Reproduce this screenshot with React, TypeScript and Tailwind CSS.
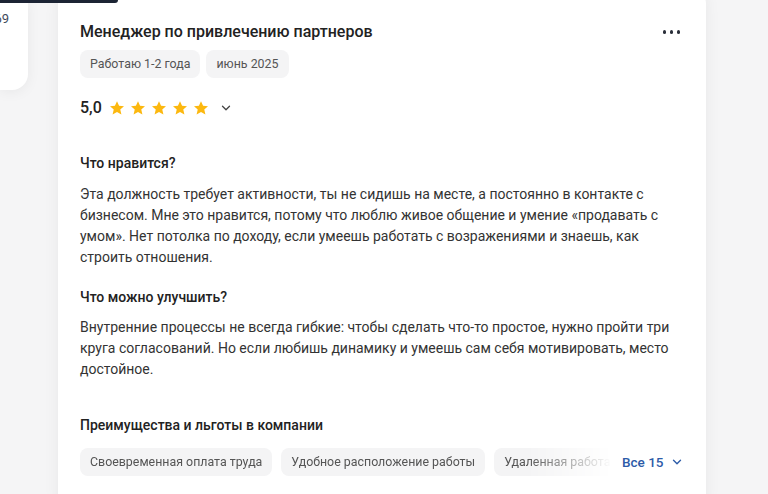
import { ChevronDown } from 'lucide-react';

const Star = () => (
  <svg width="16" height="16" viewBox="0 0 24 24" className="fill-[#fcb80f]">
    <path d="M12 1.8l3.1 6.9 7.4.7-5.6 5 1.7 7.4L12 17.9l-6.6 3.9 1.7-7.4-5.6-5 7.4-.7z" />
  </svg>
);

const benefits = ['Своевременная оплата труда', 'Удобное расположение работы', 'Удаленная работа'];

export default function App() {
  return (
    <div className="relative min-h-screen overflow-hidden bg-[#f5f5f6] font-['Roboto',sans-serif] text-[#222]">
      <div className="absolute left-0 top-0 h-[3px] w-[118px] rounded-br-sm bg-[#1c2434]" />

      <div className="flex items-start gap-[30px]">
        <div className="flex h-[90px] w-[28px] shrink-0 justify-end overflow-hidden rounded-br-2xl bg-white pt-[9px] shadow-[0_2px_14px_rgba(0,0,0,0.06)]">
          <span className="mr-[19px] whitespace-nowrap text-[13px] text-[#3f4a5c]">4,69</span>
        </div>

        <div className="-mt-[12px] w-[648px] shrink-0 rounded-2xl bg-white pb-10 pl-[22px] pr-[25px] pt-[32px] shadow-[0_0_16px_rgba(0,0,0,0.06)]">
          <div className="flex items-center justify-between">
            <h2 className="text-[16px] font-medium leading-6 text-[#222]">
              Менеджер по привлечению партнеров
            </h2>
            <div className="flex items-center gap-[3.5px] pr-[1px]">
              <span className="h-[3.5px] w-[3.5px] rounded-full bg-[#2a2f3a]" />
              <span className="h-[3.5px] w-[3.5px] rounded-full bg-[#2a2f3a]" />
              <span className="h-[3.5px] w-[3.5px] rounded-full bg-[#2a2f3a]" />
            </div>
          </div>

          <div className="mt-[6px] flex gap-[6px]">
            <span className="flex h-[28px] items-center rounded-lg bg-[#f4f4f5] px-[10px] text-[12.4px] text-[#555]">
              Работаю 1-2 года
            </span>
            <span className="flex h-[28px] items-center rounded-lg bg-[#f4f4f5] px-[10px] text-[12.4px] text-[#555]">
              июнь 2025
            </span>
          </div>

          <div className="mt-[18px] flex h-6 items-center">
            <span className="text-[16px] font-medium text-[#222]">5,0</span>
            <div className="ml-[7px] flex gap-[5px]">
              <Star />
              <Star />
              <Star />
              <Star />
              <Star />
            </div>
            <ChevronDown size={14} strokeWidth={2.2} className="ml-[10px] text-[#444]" />
          </div>

          <h3 className="mt-[33px] text-[14px] font-medium leading-5 text-[#222]">Что нравится?</h3>
          <p className="mt-[11px] text-[14px] leading-[21px] text-[#333]">
            Эта должность требует активности, ты не сидишь на месте, а постоянно в контакте с
            бизнесом. Мне это нравится, потому что люблю живое общение и умение «продавать с
            умом». Нет потолка по доходу, если умеешь работать с возражениями и знаешь, как
            строить отношения.
          </p>

          <h3 className="mt-[19px] text-[14px] font-medium leading-5 text-[#222]">Что можно улучшить?</h3>
          <p className="mt-[10px] text-[14px] leading-[21px] text-[#333]">
            Внутренние процессы не всегда гибкие: чтобы сделать что-то простое, нужно пройти три
            круга согласований. Но если любишь динамику и умеешь сам себя мотивировать, место
            достойное.
          </p>

          <h3 className="mt-[35px] text-[14px] font-medium leading-5 text-[#222]">
            Преимущества и льготы в компании
          </h3>
          <div className="mt-[13px] flex items-center">
            <div className="flex w-[532px] shrink-0 gap-[9px] overflow-hidden [mask-image:linear-gradient(to_right,black_84%,transparent_100%)]">
              {benefits.map((b) => (
                <span
                  key={b}
                  className="flex h-[28px] shrink-0 items-center whitespace-nowrap rounded-lg bg-[#f4f4f5] px-[10px] text-[12.4px] text-[#555]"
                >
                  {b}
                </span>
              ))}
            </div>
            <button className="ml-[10px] flex shrink-0 items-center gap-[6px] whitespace-nowrap text-[13.5px] font-medium text-[#2d5ba8]">
              Все 15
              <ChevronDown size={14} strokeWidth={2.4} />
            </button>
          </div>
        </div>
      </div>
    </div>
  );
}
